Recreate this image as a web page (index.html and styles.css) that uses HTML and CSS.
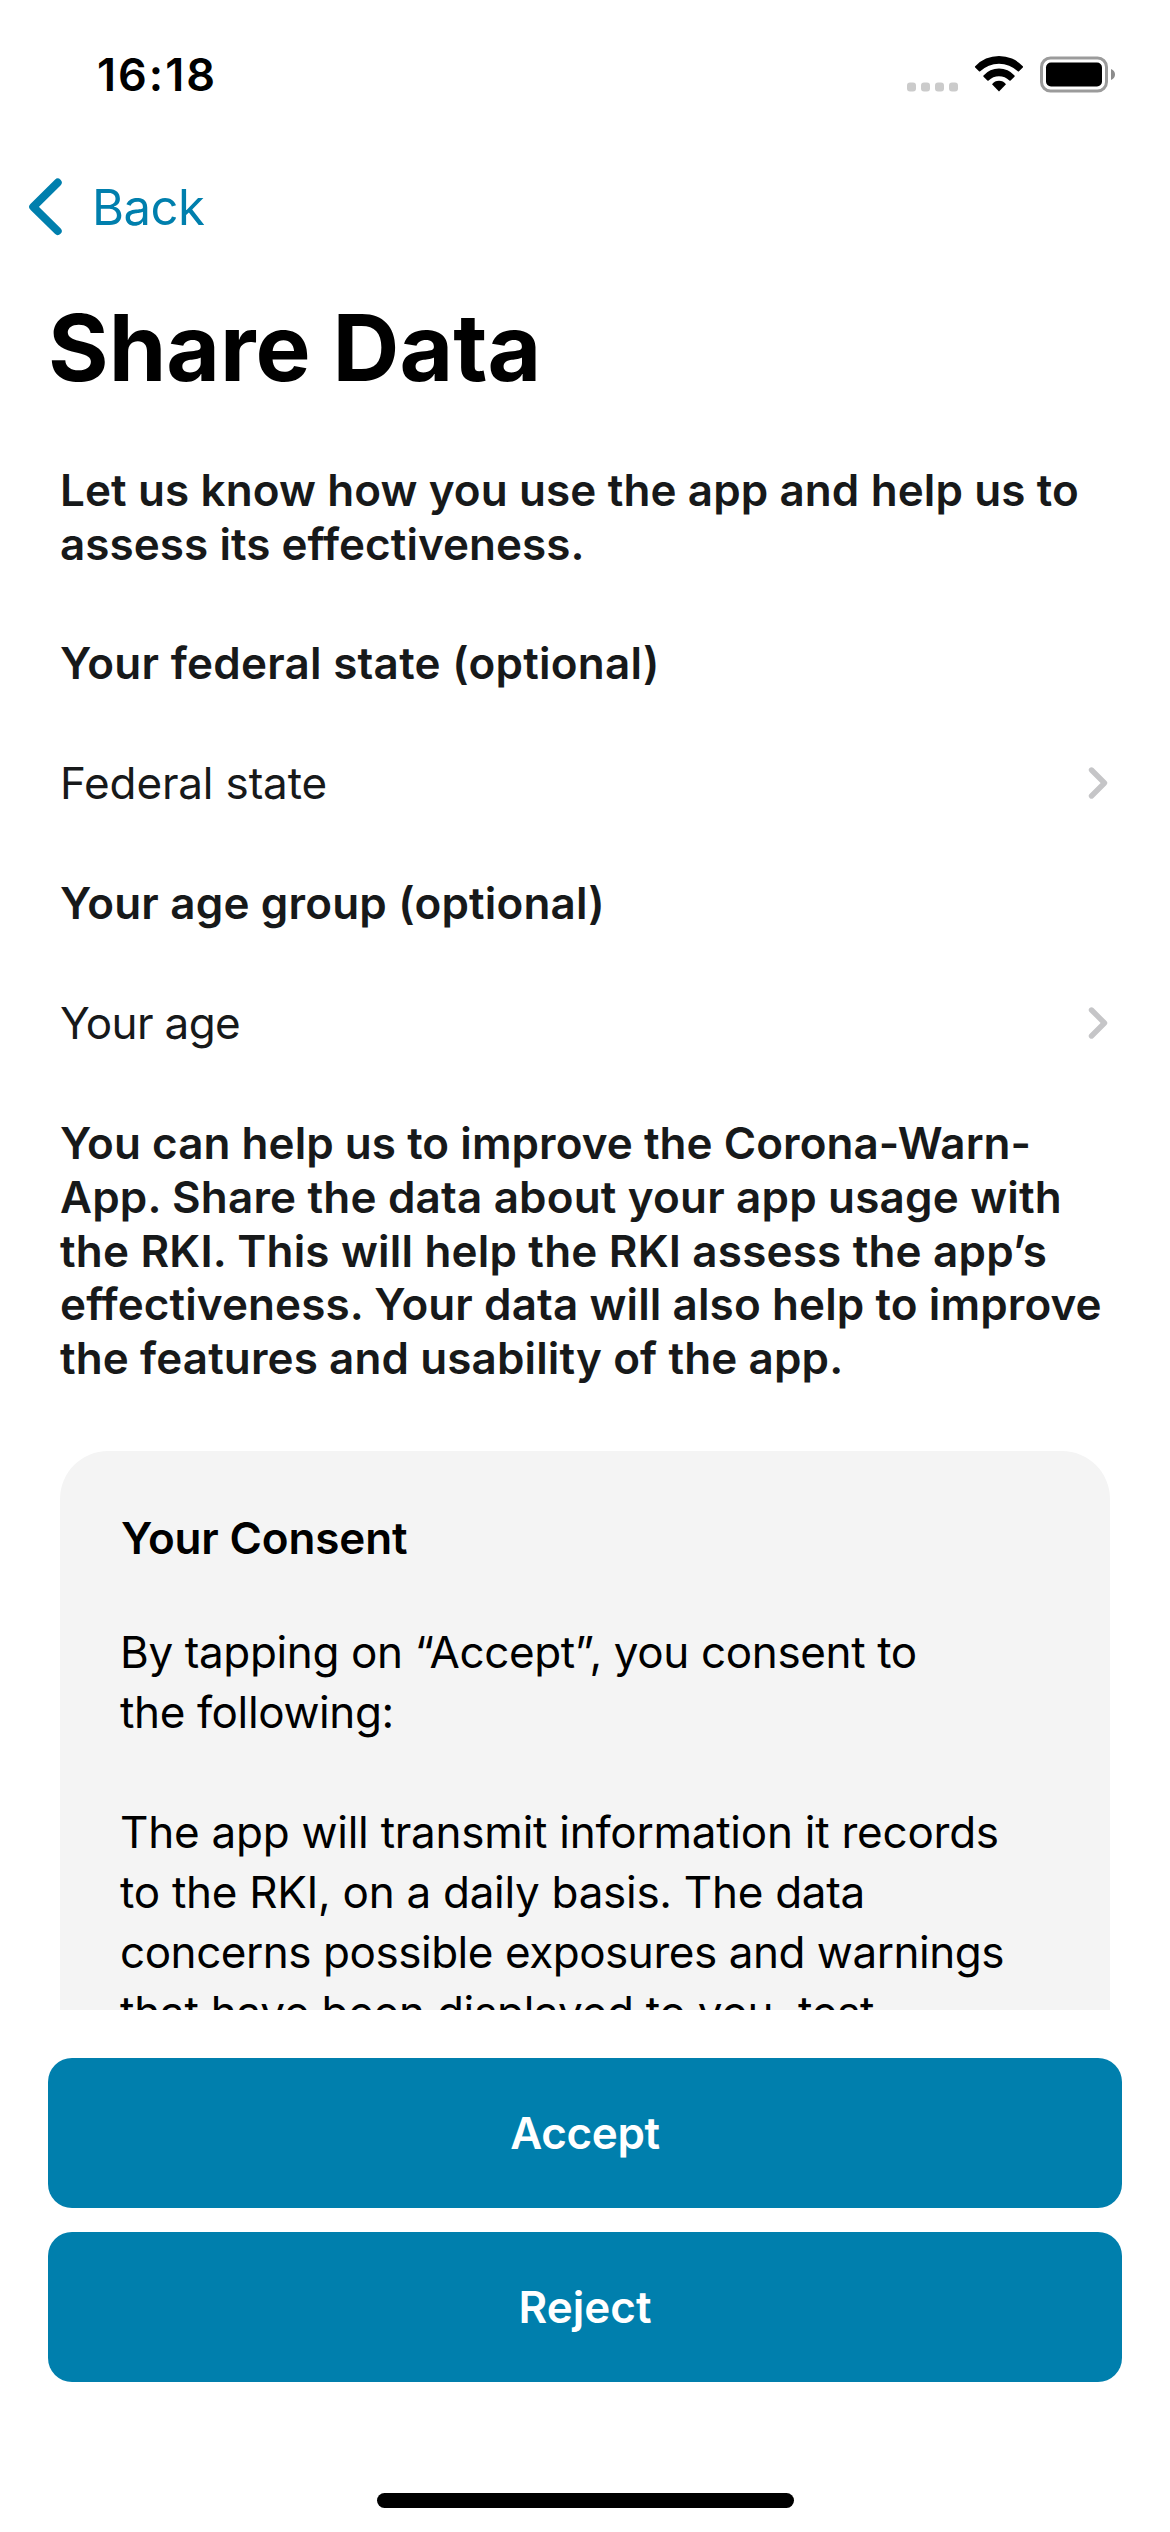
FILE: index.html
```html
<!DOCTYPE html>
<html lang="en">
<head>
<meta charset="utf-8">
<title>Share Data</title>
<link rel="stylesheet" href="styles.css">
</head>
<body>
<div class="screen">
  <header class="status-bar">
    <span class="time">16:18</span>
    <svg class="status-icons" width="210" height="40" viewBox="907 54.5 210 40">
      <g fill="#cbcbcb">
        <rect x="907" y="82" width="9" height="9" rx="3"/>
        <rect x="921" y="82" width="9" height="9" rx="3"/>
        <rect x="935" y="82" width="9" height="9" rx="3"/>
        <rect x="949" y="82" width="9" height="9" rx="3"/>
      </g>
      <path d="M975.2 65.8A32.4 32.4 0 0 1 1022.8 65.8Q1023.4 66.4 1022.8 67L1019 70.8Q1018.5 71.3 1017.8 70.8A27 27 0 0 0 980.2 70.8Q979.5 71.3 979 70.8L975.2 67Q974.6 66.4 975.2 65.8Z"/>
      <path d="M983.5 75A20.5 20.5 0 0 1 1014.5 75Q1015 75.6 1014.5 76.2L1010.6 79.9Q1010 80.4 1009.4 79.9A14.8 14.8 0 0 0 988.6 79.9Q988 80.4 987.4 79.9L983.5 76.2Q983 75.6 983.5 75Z"/>
      <path d="M992 83.7A9 9 0 0 1 1006 83.7L999 91Z"/>
      <rect x="1041.5" y="57.5" width="65" height="33" rx="9" fill="none" stroke="#9b9b9b" stroke-width="3"/>
      <rect x="1046" y="62" width="56" height="24" rx="5"/>
      <path d="M1111 68.5Q1115 70.2 1115 74T1111 79.5Z" fill="#8c8c8c"/>
    </svg>
  </header>
  <nav class="nav">
    <svg width="44" height="66" viewBox="0 0 44 66"><path d="M31.7 8.6L7.2 32.8L31.7 57" fill="none" stroke="currentColor" stroke-width="8" stroke-linecap="round" stroke-linejoin="round"/></svg>
    <span class="back">Back</span>
  </nav>
  <main class="scroll">
    <h1 class="title">Share Data</h1>
    <div class="form">
      <p class="strong"><span class="line ls-11">Let us know how you use the app and help us to</span><span class="line ls-5">assess its effectiveness.</span></p>
      <p class="strong"><span class="line ls-26">Your federal state (optional)</span></p>
      <div class="picker"><span class="ls-n15">Federal state</span><svg class="chevron" width="24" height="38" viewBox="0 0 24 38"><path d="M5.5 6L18.5 19L5.5 32"/></svg></div>
      <p class="strong"><span class="line ls-17">Your age group (optional)</span></p>
      <div class="picker"><span class="ls-n65">Your age</span><svg class="chevron" width="24" height="38" viewBox="0 0 24 38"><path d="M5.5 6L18.5 19L5.5 32"/></svg></div>
      <p class="strong"><span class="line ls-5">You can help us to improve the Corona-Warn-</span><span class="line ls-17">App. Share the data about your app usage with</span><span class="line ls-17">the RKI. This will help the RKI assess the app’s</span><span class="line ls-11">effectiveness. Your data will also help to improve</span><span class="line ls-11">the features and usability of the app.</span></p>
      <section class="card">
        <h2 class="card-title ls-n15">Your Consent</h2>
        <p class="card-text"><span class="line ls-n37">By tapping on “Accept”, you consent to</span><span class="line ls-n37">the following:</span></p>
        <p class="card-text"><span class="line ls-n24">The app will transmit information it records</span><span class="line ls-n28">to the RKI, on a daily basis. The data</span><span class="line ls-n46">concerns possible exposures and warnings</span><span class="line ls-n24">that have been displayed to you, test</span></p>
      </section>
    </div>
  </main>
  <footer class="footer">
    <button class="button ls-n37">Accept</button>
    <button class="button">Reject</button>
    <div class="home-indicator"></div>
  </footer>
</div>
</body>
</html>
```
FILE: styles.css
```css
* { box-sizing: border-box; margin: 0; padding: 0; }
body { background: #fff; font-family: Inter, "Liberation Sans", sans-serif; color: #000; }
.screen { width: 1170px; height: 2532px; display: flex; flex-direction: column; overflow: hidden; }

.status-bar { height: 141px; flex: none; padding: 8px 53px 0 97px; display: flex; align-items: center; justify-content: space-between; }
.time { font-size: 45px; font-weight: 600; letter-spacing: 2px; }

.nav { height: 132px; flex: none; padding-left: 26px; display: flex; align-items: center; gap: 22px; color: #007fad; }
.back { font-size: 49px; letter-spacing: -0.5px; }

.scroll { flex: 1; min-height: 0; overflow: hidden; padding-top: 14px; }
.title { padding-left: 48px; font-size: 92.6px; line-height: 120px; font-weight: 700; }
.form { padding: 56.8px 60px 0; display: flex; flex-direction: column; gap: 66.2px; font-size: 44px; line-height: 53.75px; color: #17191a; }
.strong { font-weight: 600; }
.line { display: block; white-space: nowrap; }
.picker { display: flex; align-items: center; justify-content: space-between; }
.chevron { flex: none; margin-top: -3px; fill: none; stroke: #c5c5c7; stroke-width: 5.4; stroke-linecap: round; stroke-linejoin: round; }

.card { margin-top: -0.8px; background: #f4f4f4; border-radius: 48px; padding: 56.5px 60px 60px; color: #000; line-height: 60px; }
.card-title { font-size: 44px; font-weight: 600; margin-bottom: 54px; padding-left: 1px; }
.card-text { margin-bottom: 60px; }

.footer { height: 522px; flex: none; padding: 48px 48px 24px; display: flex; flex-direction: column; gap: 24px; }
.button { flex: none; height: 150px; border: 0; border-radius: 24px; background: #007fad; color: #fff; font: 600 44px Inter, "Liberation Sans", sans-serif; }
.home-indicator { width: 417px; height: 15px; margin: auto auto 0; border-radius: 8px; background: #000; }

.ls-26 { letter-spacing: 0.26px; }
.ls-17 { letter-spacing: 0.18px; }
.ls-11 { letter-spacing: 0.11px; }
.ls-5 { letter-spacing: 0.05px; }
.ls-n15 { letter-spacing: -0.15px; }
.ls-n24 { letter-spacing: -0.24px; }
.ls-n28 { letter-spacing: -0.28px; }
.ls-n37 { letter-spacing: -0.37px; }
.ls-n46 { letter-spacing: -0.46px; }
.ls-n65 { letter-spacing: -0.65px; }
```
